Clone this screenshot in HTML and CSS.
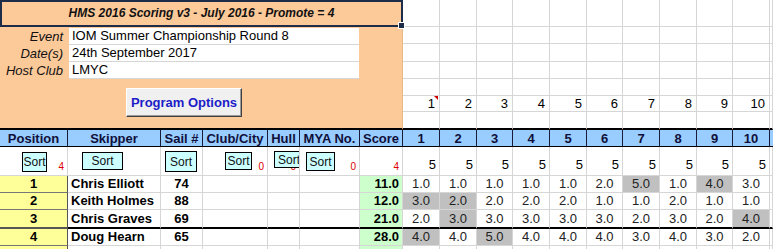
FILE: index.html
```html
<!DOCTYPE html>
<html lang="en">
<head>
	<meta charset="UTF-8">
	<title>HMS 2016 Scoring</title>
	<link rel="stylesheet" href="styles.css">
</head>
<body>
	<table class="sheet">
		<colgroup>
			<col class="w68"><col class="w93"><col class="w42"><col class="w65"><col class="w32"><col class="w60"><col class="w43">
			<col class="w37"><col class="w37"><col class="w36"><col class="w37"><col class="w37"><col class="w36"><col class="w37"><col class="w37"><col class="w36"><col class="w37">
			<col class="w3">
		</colgroup>

		<tr class="r1">
			<td class="panel" colspan="7" rowspan="7">
				<div class="title">HMS 2016 Scoring v3 - July 2016 - Promote = 4</div>
				<div class="info">
					<span class="lbl">Event</span><span class="val">IOM Summer Championship Round 8</span>
					<span class="lbl">Date(s)</span><span class="val">24th September 2017</span>
					<span class="lbl">Host Club</span><span class="val">LMYC</span>
				</div>
				<button class="options">Program Options</button>
			</td>
			<td></td><td></td><td></td><td></td><td></td><td></td><td></td><td></td><td></td><td></td><td></td>
		</tr>
		<tr class="r2"><td></td><td></td><td></td><td></td><td></td><td></td><td></td><td></td><td></td><td></td><td></td></tr>
		<tr class="r3"><td></td><td></td><td></td><td></td><td></td><td></td><td></td><td></td><td></td><td></td><td></td></tr>
		<tr class="r4"><td></td><td></td><td></td><td></td><td></td><td></td><td></td><td></td><td></td><td></td><td></td></tr>
		<tr class="r5"><td></td><td></td><td></td><td></td><td></td><td></td><td></td><td></td><td></td><td></td><td></td></tr>
		<tr class="r6 races">
			<td class="note">1</td><td>2</td><td>3</td><td>4</td><td>5</td><td>6</td><td>7</td><td>8</td><td>9</td><td>10</td><td></td>
		</tr>
		<tr class="r7"><td></td><td></td><td></td><td></td><td></td><td></td><td></td><td></td><td></td><td></td><td></td></tr>

		<tr class="head">
			<th>Position</th><th>Skipper</th><th>Sail #</th><th>Club/City</th><th>Hull</th><th>MYA No.</th><th>Score</th>
			<th>1</th><th>2</th><th>3</th><th>4</th><th>5</th><th>6</th><th>7</th><th>8</th><th>9</th><th>10</th><th></th>
		</tr>

		<tr class="sortrow">
			<td><button class="sort s-pos">Sort</button><span class="count">4</span></td>
			<td><button class="sort s-skip">Sort</button></td>
			<td><button class="sort s-sail">Sort</button></td>
			<td><button class="sort s-club">Sort</button><span class="count">0</span></td>
			<td><button class="sort s-hull">Sort</button><span class="count">0</span></td>
			<td><button class="sort s-mya">Sort</button><span class="count">0</span></td>
			<td><span class="count">4</span></td>
			<td class="max">5</td><td class="max">5</td><td class="max">5</td><td class="max">5</td><td class="max">5</td>
			<td class="max">5</td><td class="max">5</td><td class="max">5</td><td class="max">5</td><td class="max">5</td><td></td>
		</tr>

		<tr class="row">
			<td class="pos">1</td><td class="name">Chris Elliott</td><td class="sail">74</td><td></td><td></td><td></td><td class="score">11.0</td>
			<td>1.0</td><td>1.0</td><td>1.0</td><td>1.0</td><td>1.0</td><td>2.0</td><td class="d">5.0</td><td>1.0</td><td class="d">4.0</td><td>3.0</td><td></td>
		</tr>
		<tr class="row">
			<td class="pos">2</td><td class="name">Keith Holmes</td><td class="sail">88</td><td></td><td></td><td></td><td class="score">12.0</td>
			<td class="d">3.0</td><td class="d">2.0</td><td>2.0</td><td>2.0</td><td>2.0</td><td>1.0</td><td>1.0</td><td>2.0</td><td>1.0</td><td>1.0</td><td></td>
		</tr>
		<tr class="row cut">
			<td class="pos">3</td><td class="name">Chris Graves</td><td class="sail">69</td><td></td><td></td><td></td><td class="score">21.0</td>
			<td>2.0</td><td class="d">3.0</td><td>3.0</td><td>3.0</td><td>3.0</td><td>3.0</td><td>2.0</td><td>3.0</td><td>2.0</td><td class="d">4.0</td><td></td>
		</tr>
		<tr class="row">
			<td class="pos">4</td><td class="name">Doug Hearn</td><td class="sail">65</td><td></td><td></td><td></td><td class="score">28.0</td>
			<td class="d">4.0</td><td>4.0</td><td class="d">5.0</td><td>4.0</td><td>4.0</td><td>4.0</td><td>3.0</td><td>4.0</td><td>3.0</td><td>2.0</td><td></td>
		</tr>
		<tr class="row">
			<td class="pos"></td><td></td><td></td><td></td><td></td><td></td><td class="score"></td>
			<td></td><td></td><td></td><td></td><td></td><td></td><td></td><td></td><td></td><td></td><td></td>
		</tr>
	</table>
</body>
</html>
```

FILE: styles.css
```css
*{padding: 0;margin: 0;box-sizing: border-box;}
body{
	background: #fff;
	font-family: "Liberation Sans", Arial, sans-serif;
	font-size: 13px;
	color: #000;
	overflow: hidden;
}

.sheet{
	width: 773px;
	table-layout: fixed;
	border-collapse: separate;
	border-spacing: 0;
}
.sheet td,.sheet th{
	padding: 0;
	border-right: 1px solid #d6d6d6;
	border-bottom: 1px solid #d6d6d6;
	white-space: nowrap;
	overflow: hidden;
}

.w68{width: 68px;}
.w93{width: 93px;}
.w42{width: 42px;}
.w65{width: 65px;}
.w32{width: 32px;}
.w60{width: 60px;}
.w43{width: 43px;}
.w37{width: 37px;}
.w36{width: 36px;}
.w3{width: 3px;}

/* top block */
.r1 td{height: 27px;}
.r2 td{height: 17px;}
.r3 td{height: 18px;}
.r4 td{height: 17px;}
.r5 td{height: 17px;}
.r6 td{height: 16px;}
.r7 td{height: 18px;border-bottom: 2px solid #000;}

.sheet .panel{
	background: #fcc999;
	vertical-align: top;
	border-bottom: 2px solid #000;
	border-right: 1px solid #e8b888;
	overflow: visible;
}
.title{
	position: relative;
	width: 403px;
	height: 27px;
	border: 2px solid #1d2c48;
	text-align: center;
	font-size: 12px;
	font-weight: bold;
	font-style: italic;
	line-height: 23px;
	color: #111;
}
.title:after{
	content: "";
	position: absolute;
	right: -4px;
	bottom: -4px;
	width: 5px;
	height: 5px;
	background: #1d2c48;
	border: 1px solid #fff;
}
.info{
	display: grid;
	grid-template-columns: 69px 290px;
	grid-auto-rows: 17px;
	margin-top: 1px;
}
.lbl{
	font-style: italic;
	text-align: right;
	padding-right: 6px;
	line-height: 17px;
	color: #111;
}
.val{
	background: #fff;
	border-bottom: 1px solid #d6d6d6;
	padding-left: 3px;
	line-height: 16px;
}
.options{
	display: block;
	width: 116px;
	height: 29px;
	margin: 9px 0 0 126px;
	background: #f0f0f0;
	border: 1px solid;
	border-color: #fff #404040 #404040 #fff;
	box-shadow: inset -1px -1px 0 #9a9a9a;
	font-family: inherit;
	font-size: 13px;
	font-weight: bold;
	color: #1c1cc8;
}

.races td{
	text-align: right;
	padding-right: 4px;
	line-height: 15px;
}
.sheet .note{position: relative;}
.note:after{
	content: "";
	position: absolute;
	top: 0;
	right: 1px;
	border-top: 4px solid #d00000;
	border-left: 4px solid transparent;
}

/* header */
.head th{
	height: 17px;
	background: #99ccff;
	border-right: 1px solid #1a1a3a;
	border-bottom: 1px solid #000;
	font-size: 13px;
	font-weight: bold;
	color: #10103a;
	text-align: center;
	line-height: 15px;
}
.head th:last-child{border-right: none;}

/* sort buttons */
.sortrow td{
	height: 29px;
	vertical-align: top;
	position: relative;
}
.sort{
	position: relative;
	z-index: 2;
	display: block;
	margin-top: 5px;
	background: #ccffff;
	border: 1px solid #000;
	font-family: inherit;
	font-size: 12px;
	color: #111;
	overflow: hidden;
	white-space: nowrap;
}
.s-pos{margin-left: 22px;width: 25px;height: 20px;}
.s-skip{margin-left: 14px;width: 41px;height: 18px;}
.s-sail{margin-left: 4px;margin-top: 4px;width: 32px;height: 21px;}
.s-club{margin-left: 22px;width: 27px;height: 18px;}
.s-hull{margin-left: 6px;margin-top: 4px;width: 27px;height: 17px;text-align: left;padding-left: 3px;}
.s-mya{margin-left: 6px;width: 29px;height: 19px;}
.count{
	position: absolute;
	right: 3px;
	bottom: 3px;
	font-size: 10px;
	line-height: 11px;
	color: #e00000;
}
.sheet .max{
	vertical-align: bottom;
	text-align: right;
	padding: 0 3px 3px 0;
}

/* results */
.row td{
	height: 17px;
	line-height: 16px;
	text-align: center;
	color: #222;
}
.sheet .pos{
	background: #ffff99;
	font-weight: bold;
	color: #000;
	border-right: 1px solid #555;
	border-bottom: 1px solid #777;
}
.sheet .name{
	text-align: left;
	padding-left: 3px;
	font-weight: bold;
	color: #000;
}
.sheet .sail{font-weight: bold;color: #000;}
.sheet .score{
	background: #ccffcc;
	text-align: right;
	padding-right: 3px;
	font-weight: bold;
	color: #000;
}
.sheet .d{background: #c0c0c0;}
.cut td{height: 19px;border-bottom: 2px solid #000;}
.sheet .cut .pos{border-bottom: 2px solid #555;}
```
